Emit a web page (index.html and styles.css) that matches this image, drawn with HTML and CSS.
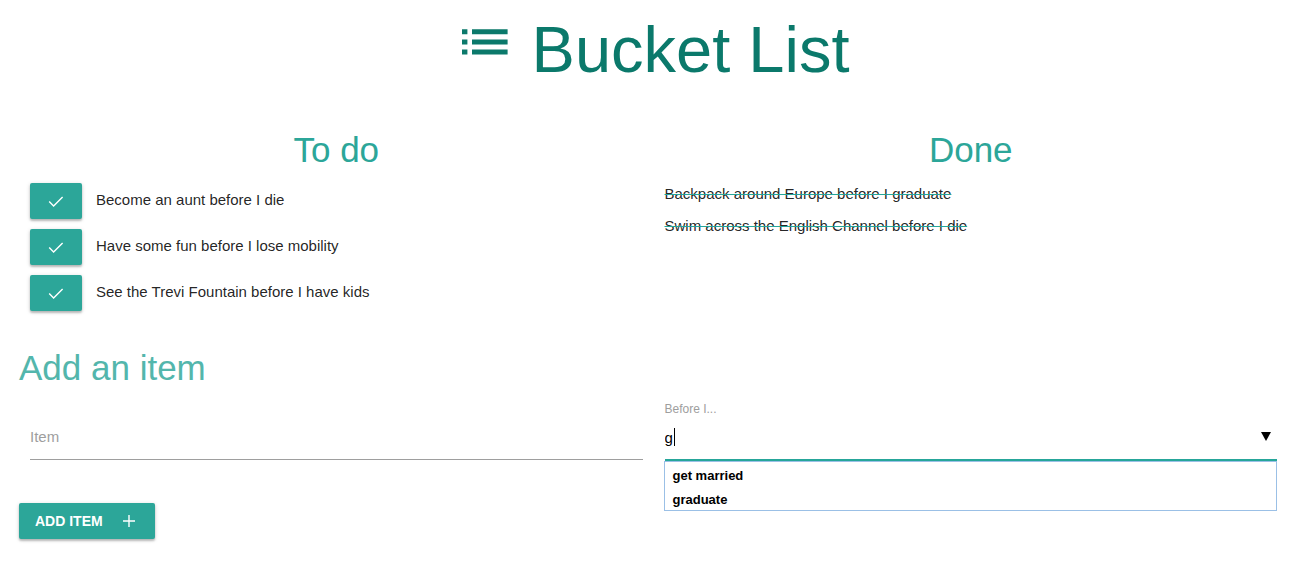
FILE: index.html
```html
<!DOCTYPE html>
<html lang="en">
<head>
<meta charset="utf-8">
<meta name="viewport" content="width=device-width, initial-scale=1">
<title>Bucket List</title>
<link rel="stylesheet" href="styles.css">
</head>
<body>
<header class="page-header">
  <svg class="list-icon" viewBox="0 0 46 26" aria-hidden="true">
    <path fill="currentColor" d="M0 .3h5.4v4.9H0zM10 .3h35.6v4.9H10zM0 10.5h5.4v4.9H0zM10 10.5h35.6v4.9H10zM0 20.6h5.4v4.9H0zM10 20.6h35.6v4.9H10z"/>
  </svg>
  <h1 class="title">Bucket List</h1>
</header>
<main class="container">
  <div class="columns">
    <section class="column">
      <h2 class="column-title">To do</h2>
      <ul class="todo-list">
        <li class="todo-item">
          <button class="btn btn-check" type="button" aria-label="Complete: Become an aunt"><svg class="check" viewBox="0 0 16 12"><path d="M1.2 6.6L5.6 11L14.6 2"/></svg></button>
          <span>Become an aunt before I die</span>
        </li>
        <li class="todo-item">
          <button class="btn btn-check" type="button" aria-label="Complete: Have some fun"><svg class="check" viewBox="0 0 16 12"><path d="M1.2 6.6L5.6 11L14.6 2"/></svg></button>
          <span>Have some fun before I lose mobility</span>
        </li>
        <li class="todo-item">
          <button class="btn btn-check" type="button" aria-label="Complete: See the Trevi Fountain"><svg class="check" viewBox="0 0 16 12"><path d="M1.2 6.6L5.6 11L14.6 2"/></svg></button>
          <span>See the Trevi Fountain before I have kids</span>
        </li>
      </ul>
    </section>
    <section class="column">
      <h2 class="column-title">Done</h2>
      <ul class="done-list">
        <li class="done-item"><span class="struck">Backpack around Europe before I graduate</span></li>
        <li class="done-item"><span class="struck">Swim across the English Channel before I die</span></li>
      </ul>
    </section>
  </div>
  <form class="add-form">
    <h2 class="form-title">Add an item</h2>
    <div class="columns">
      <div class="column field">
        <label class="label label-inside" for="item">Item</label>
        <input class="input" id="item" type="text">
      </div>
      <div class="column field">
        <label class="label label-above" for="before">Before I...</label>
        <div class="combo">
          <input class="input input-active" id="before" type="text" value="g" autocomplete="off" role="combobox" aria-expanded="true" aria-controls="suggestions">
          <span class="caret"></span>
          <svg class="arrow" viewBox="0 0 10 9" aria-hidden="true"><path d="M0 0h10L5 9z"/></svg>
          <ul class="suggestions" id="suggestions" role="listbox">
            <li class="suggestion" role="option">get married</li>
            <li class="suggestion" role="option">graduate</li>
          </ul>
        </div>
      </div>
    </div>
    <button class="btn btn-add" type="submit">ADD ITEM
      <svg class="plus" viewBox="0 0 12 12" aria-hidden="true"><path d="M6 0v12M0 6h12"/></svg>
    </button>
  </form>
</main>
</body>
</html>
```
FILE: styles.css
```css
* {
  box-sizing: border-box;
}

body {
  margin: 0;
  background: #fff;
  color: rgba(0, 0, 0, 0.87);
  font: 15px/22px "Liberation Sans", Arial, sans-serif;
}

h1, h2, ul {
  margin: 0;
  padding: 0;
  font-weight: 400;
  list-style: none;
}

.page-header {
  display: flex;
  justify-content: center;
  gap: 24px;
  padding-top: 14px;
  color: #0b796b;
}

.list-icon {
  width: 46px;
  height: 26px;
  margin-top: 15px;
}

.title {
  font-size: 65px;
  line-height: 72px;
}

.container {
  padding: 42px 23px 24px 19px;
}

.columns {
  display: grid;
  grid-template-columns: 1fr 1fr;
}

.column {
  min-width: 0;
  padding: 0 11px;
}

.column-title {
  color: #2ca699;
  font-size: 35px;
  line-height: 44px;
  text-align: center;
}

.todo-list {
  display: grid;
  gap: 10px;
  padding-top: 11px;
}

.todo-item {
  display: flex;
  gap: 14px;
  line-height: 34px;
}

.btn {
  display: flex;
  align-items: center;
  justify-content: center;
  height: 36px;
  padding: 0;
  border: 0;
  border-radius: 2px;
  background: #2ca699;
  box-shadow: 0 2px 2px rgba(0, 0, 0, 0.2), 0 1px 4px rgba(0, 0, 0, 0.16);
  color: #fff;
  font: bold 14px/36px "Liberation Sans", Arial, sans-serif;
  cursor: pointer;
}

.btn-check {
  width: 52px;
}

.check {
  width: 16px;
  height: 12px;
  fill: none;
  stroke: currentColor;
  stroke-width: 1.4;
}

.done-list {
  display: grid;
  gap: 10px;
  padding-top: 11px;
}

.struck {
  text-decoration: line-through #26a69a 1px;
}

.add-form {
  padding-top: 35px;
}

.form-title {
  color: #53b6ac;
  font-size: 35px;
  line-height: 44px;
}

.field {
  display: grid;
  grid-template-rows: 25px 45px;
}

.label {
  color: #9e9e9e;
}

.label-above {
  grid-row: 1;
  padding-top: 8px;
  font-size: 12px;
  line-height: 22px;
}

.label-inside {
  grid-area: 2 / 1;
  z-index: 1;
  line-height: 44px;
  pointer-events: none;
}

.input {
  grid-area: 2 / 1;
  width: 100%;
  height: 45px;
  padding: 0;
  border: 0;
  border-bottom: 1px solid #9e9e9e;
  outline: 0;
  background: transparent;
  color: #000;
  font: 15px "Liberation Sans", Arial, sans-serif;
}

.combo {
  position: relative;
  grid-row: 2;
}

.input-active {
  border-bottom-color: #26a69a;
  box-shadow: 0 1px 0 #26a69a;
}

.caret {
  position: absolute;
  top: 13px;
  left: 9px;
  width: 1px;
  height: 18px;
  background: #000;
}

.arrow {
  position: absolute;
  top: 17px;
  right: 6px;
  width: 10px;
  height: 9px;
}

.suggestions {
  position: absolute;
  top: 46px;
  right: 0;
  left: -1px;
  height: 50px;
  padding: 2px 8px 0;
  border: 1px solid #9bc0e6;
  background: #fff;
}

.suggestion {
  color: #000;
  font-size: 13px;
  font-weight: 700;
  line-height: 24px;
}

.btn-add {
  gap: 20px;
  width: max-content;
  margin-top: 43px;
  padding: 0 20px 0 16px;
}

.plus {
  width: 12px;
  height: 12px;
  fill: none;
  stroke: currentColor;
  stroke-width: 1.4;
}
```
